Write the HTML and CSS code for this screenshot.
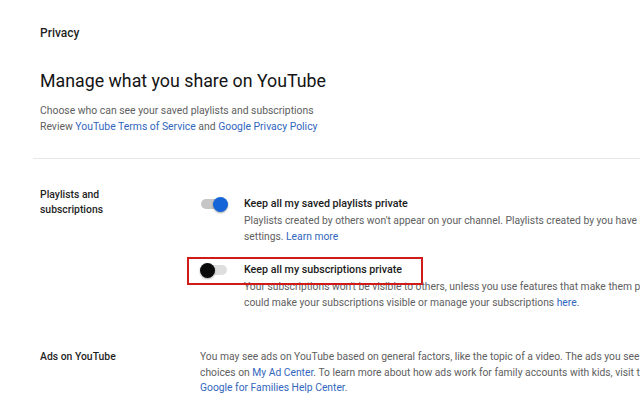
FILE: index.html
```html
<!DOCTYPE html>
<html>
<head>
<meta charset="utf-8">
<link rel="stylesheet" href="styles.css">
</head>
<body>
<div class="page">
  <div class="crumb">Privacy</div>
  <h1 class="title">Manage what you share on YouTube</h1>
  <p class="sub">Choose who can see your saved playlists and subscriptions<br>Review <a>YouTube Terms of Service</a> and <a>Google Privacy Policy</a></p>
  <div class="divider"></div>

  <section class="row first">
    <div class="label">Playlists and<br>subscriptions</div>
    <div class="content">
      <div class="option">
        <span class="toggle on"><span class="knob"></span></span>
        <div class="otext">
          <div class="otitle">Keep all my saved playlists private</div>
          <div class="desc">Playlists created by others won't appear on your channel. Playlists created by you have individual privacy<br>settings. <a>Learn more</a></div>
        </div>
      </div>
      <div class="option second">
        <span class="toggle off"><span class="knob"></span></span>
        <div class="otext">
          <div class="otitle">Keep all my subscriptions private</div>
          <div class="desc">Your subscriptions won't be visible to others, unless you use features that make them public. You<br>could make your subscriptions visible or manage your subscriptions <a>here</a>.</div>
        </div>
        <div class="highlight"></div>
      </div>
    </div>
  </section>

  <section class="row ads">
    <div class="label">Ads on YouTube</div>
    <div class="content">
      <div class="desc plain">You may see ads on YouTube based on general factors, like the topic of a video. The ads you see may also depend on your<br>choices on <a>My Ad Center</a>. To learn more about how ads work for family accounts with kids, visit the<br><a>Google for Families Help Center</a>.</div>
    </div>
  </section>
</div>
</body>
</html>
```
FILE: styles.css
```css
html, body {
  margin: 0;
  padding: 0;
  background: #ffffff;
  overflow: hidden;
}
body {
  width: 640px;
  height: 410px;
  font-family: Roboto, "Liberation Sans", Arial, sans-serif;
  color: #0f0f0f;
}
a {
  color: #3266bd;
  text-decoration: none;
}
.page {
  padding: 25px 0 0 40px;
}
.crumb {
  font-size: 12px;
  font-weight: 500;
  line-height: 16px;
  color: #1f1f1f;
}
.title {
  margin: 28px 0 0 0;
  font-size: 17.8px;
  font-weight: 400;
  line-height: 24px;
  color: #141414;
}
.sub {
  margin: 10px 0 0 0;
  font-size: 10.4px;
  line-height: 15.5px;
  color: #606060;
  white-space: nowrap;
}
.divider {
  margin: 24px 0 0 -7px;
  height: 1px;
  background: #e8e8e8;
}
.row {
  display: grid;
  grid-template-columns: 160px 1fr;
  white-space: nowrap;
}
.row.first {
  margin-top: 28px;
}
.label {
  font-size: 10.4px;
  font-weight: 500;
  line-height: 15px;
  color: #1f1f1f;
}
.content {
  display: flex;
  flex-direction: column;
  min-width: 0;
}
.option {
  position: relative;
  display: flex;
  align-items: flex-start;
  padding-top: 9px;
}
.option.second {
  margin-top: 8px;
}
.toggle {
  position: relative;
  display: block;
  flex: none;
  width: 28px;
  height: 16px;
  margin-right: 16px;
}
.toggle::before {
  content: "";
  position: absolute;
  left: 1px;
  top: 3px;
  width: 26px;
  height: 10px;
  border-radius: 5px;
  background: #c6c6c6;
}
.toggle.off::before {
  background: #dedede;
}
.knob {
  position: absolute;
  top: 0.5px;
  width: 15px;
  height: 15px;
  border-radius: 50%;
  box-shadow: 0 1px 2px rgba(0,0,0,0.35);
}
.toggle.on .knob {
  left: 13px;
  background: #1565d8;
}
.toggle.off .knob {
  left: 0;
  background: #0a0a0a;
}
.otitle {
  font-size: 10.7px;
  font-weight: 500;
  line-height: 16px;
  color: #1a1a1a;
}
.desc {
  font-size: 10.3px;
  line-height: 16px;
  color: #606060;
  margin-top: 1px;
}
.option.second .desc {
  line-height: 15.5px;
}
.highlight {
  position: absolute;
  box-sizing: border-box;
  left: -13px;
  top: 4px;
  width: 236px;
  height: 28px;
  border: 2px solid #d01b1b;
}
.row.ads {
  margin-top: 39px;
}
.desc.plain {
  margin-top: 0;
  line-height: 15.5px;
}
```
